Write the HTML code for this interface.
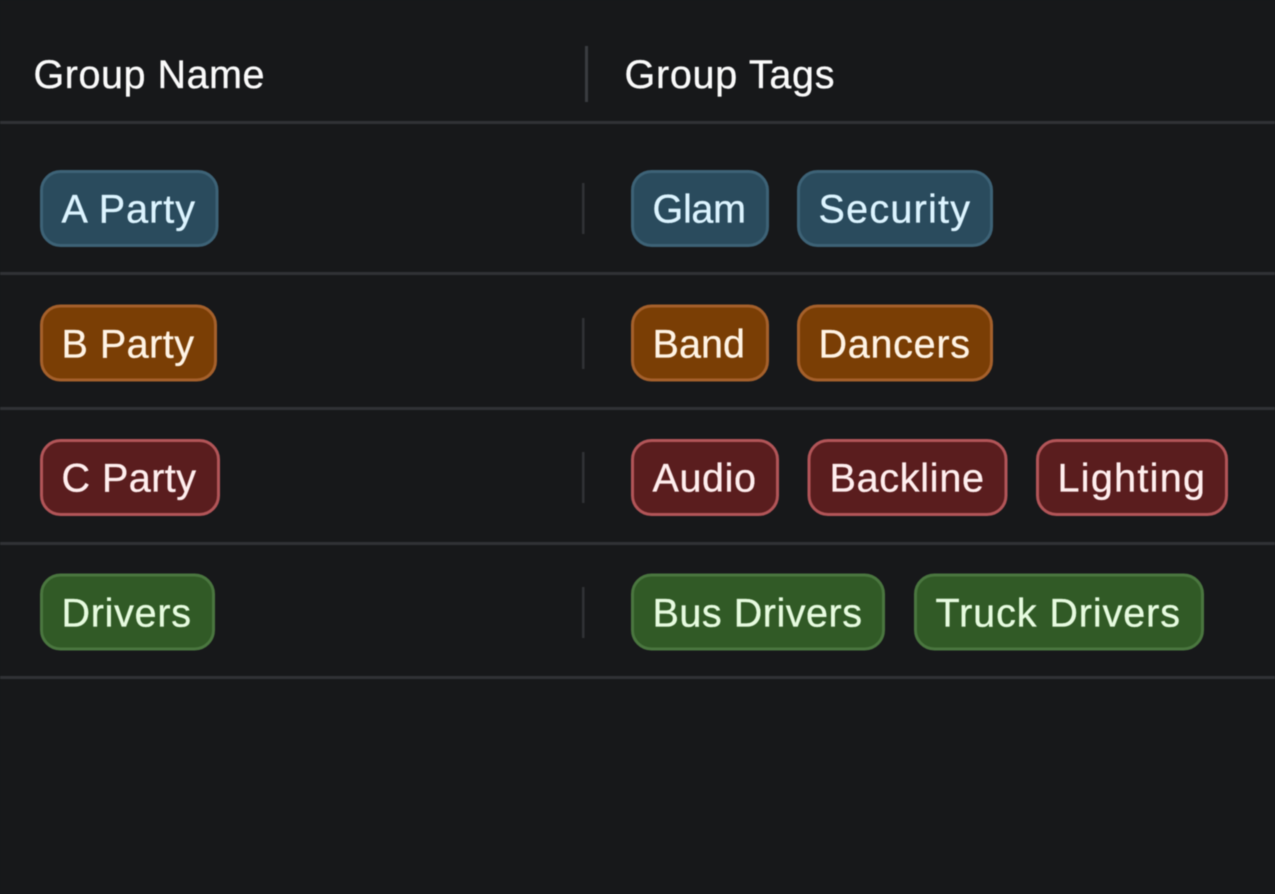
<!DOCTYPE html>
<html><head><meta charset="utf-8"><style>
html,body{margin:0;padding:0;background:#17181a;width:1275px;height:894px;overflow:hidden}
svg{display:block;filter:blur(.45px)}
text{font-family:"Liberation Sans",sans-serif;font-size:39.5px;font-weight:400;stroke-width:.35px}
.b rect{fill:#2a4b5d;stroke:#3d6276}.b text{fill:#dcf4ff;stroke:#dcf4ff}
.o rect{fill:#7a3e05;stroke:#a5602b}.o text{fill:#fff3e4;stroke:#fff3e4}
.r rect{fill:#5a1d1e;stroke:#b25558}.r text{fill:#ffeeee;stroke:#ffeeee}
.g rect{fill:#315a26;stroke:#4a763f}.g text{fill:#e6fbdf;stroke:#e6fbdf}
.p rect{stroke-width:3}
.h{stroke:#fafafa}
</style></head><body>
<svg width="1275" height="894" viewBox="0 0 1275 894" xmlns="http://www.w3.org/2000/svg">
<rect width="1275" height="894" fill="#17181a"/>
<g fill="#303235">
<rect x="0" y="121" width="1275" height="3"/>
<rect x="0" y="272" width="1275" height="3"/>
<rect x="0" y="407" width="1275" height="3"/>
<rect x="0" y="542" width="1275" height="3"/>
<rect x="0" y="676" width="1275" height="3"/>
<rect x="585" y="46" width="3" height="56" fill="#3a3c3f"/>
<rect x="582" y="183" width="2.5" height="51"/>
<rect x="582" y="318" width="2.5" height="51"/>
<rect x="582" y="452" width="2.5" height="51"/>
<rect x="582" y="587" width="2.5" height="51"/>
</g>
<text class="h" x="33.5" y="88" fill="#fafafa" textLength="231" lengthAdjust="spacing">Group Name</text>
<text class="h" x="624.5" y="88" fill="#fafafa" textLength="210" lengthAdjust="spacing">Group Tags</text>

<g class="p b">
<rect x="41.5" y="171.5" width="175.5" height="74" rx="19"/><text x="61.5" y="222.5" textLength="133.5">A Party</text>
<rect x="632.5" y="171.5" width="135" height="74" rx="19"/><text x="652.5" y="222.5" textLength="93.5">Glam</text>
<rect x="798.5" y="171.5" width="193" height="74" rx="19"/><text x="818.5" y="222.5" textLength="151.5">Security</text>
</g>
<g class="p o">
<rect x="41.5" y="306" width="174" height="74" rx="19"/><text x="61.5" y="357.5" textLength="132.5">B Party</text>
<rect x="632.5" y="306" width="135" height="74" rx="19"/><text x="652.5" y="357.5" textLength="92.5">Band</text>
<rect x="798.5" y="306" width="193" height="74" rx="19"/><text x="818.5" y="357.5" textLength="151.5">Dancers</text>
</g>
<g class="p r">
<rect x="41.5" y="440.5" width="177" height="74" rx="19"/><text x="61.5" y="491.5" textLength="134.5">C Party</text>
<rect x="632.5" y="440.5" width="145" height="74" rx="19"/><text x="652.5" y="491.5" textLength="103.5">Audio</text>
<rect x="809" y="440.5" width="197" height="74" rx="19"/><text x="829.5" y="491.5" textLength="154.5">Backline</text>
<rect x="1037.5" y="440.5" width="189" height="74" rx="19"/><text x="1057.5" y="491.5" textLength="147.5">Lighting</text>
</g>
<g class="p g">
<rect x="41.5" y="575" width="172" height="74" rx="19"/><text x="61.5" y="626.5" textLength="129.5">Drivers</text>
<rect x="632.5" y="575" width="251" height="74" rx="19"/><text x="652.5" y="626.5" textLength="209.5">Bus Drivers</text>
<rect x="915.5" y="575" width="287" height="74" rx="19"/><text x="935.5" y="626.5" textLength="244.5">Truck Drivers</text>
</g>
</svg>
</body></html>
